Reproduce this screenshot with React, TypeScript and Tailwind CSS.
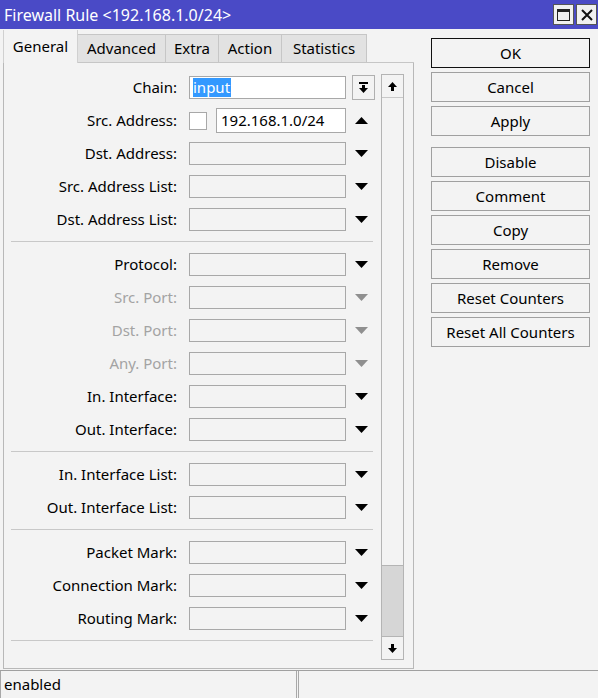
import React from "react";

const font = { fontFamily: '"Noto Sans", "Open Sans", sans-serif' };

const Tri: React.FC<{ up?: boolean; gray?: boolean }> = ({ up, gray }) => (
  <svg width="13" height="7" viewBox="0 0 13 7">
    <path
      d={up ? "M0 7H13L6.5 0Z" : "M0 0H13L6.5 7Z"}
      fill={gray ? "#8f8f8f" : "#000"}
    />
  </svg>
);

const EmptyBox = () => (
  <div className="w-[157px] h-[23px] border border-[#a8a8a8] bg-[#f3f3f3]" />
);

type RowProps = {
  label: string;
  disabled?: boolean;
  children?: React.ReactNode;
  arrow?: React.ReactNode;
};

const Row: React.FC<RowProps> = ({ label, disabled, children, arrow }) => (
  <div className="h-[33px] flex items-center">
    <div
      className={`w-[173px] text-right text-[15px] ${
        disabled ? "text-[#a3a3a3]" : "text-black"
      }`}
    >
      {label}
    </div>
    <div className="ml-[12px] flex items-center">{children ?? <EmptyBox />}</div>
    <div className="w-[30px] flex items-center justify-center">
      {arrow ?? <Tri gray={disabled} />}
    </div>
  </div>
);

const Sep = () => (
  <div className="h-[12px] pt-[5px]">
    <div className="ml-[7px] w-[362px] h-px bg-[#c8c8c8]" />
  </div>
);

const tabs = ["General", "Advanced", "Extra", "Action", "Statistics"];
const tabW = ["w-[75px]", "w-[88px]", "w-[53px]", "w-[63px]", "w-[85px]"];

const buttons = [
  "OK",
  "Cancel",
  "Apply",
  "Disable",
  "Comment",
  "Copy",
  "Remove",
  "Reset Counters",
  "Reset All Counters",
];

export default function App() {
  return (
    <div
      className="w-[598px] h-[698px] flex flex-col bg-[#f3f3f3] overflow-hidden"
      style={font}
    >
      {/* Title bar */}
      <div className="h-[29px] bg-[#4a4ac6] flex items-center pl-[4px] pr-[1px]">
        <span className="text-white text-[16px] flex-1">
          Firewall Rule &lt;192.168.1.0/24&gt;
        </span>
        <div className="w-[21px] h-[21px] bg-[#f0f0f0] border border-[#555] flex items-center justify-center">
          <div className="w-[13px] h-[12px] border border-[#222] border-t-[3px]" />
        </div>
        <div className="w-[21px] h-[21px] ml-[2px] bg-[#f0f0f0] border border-[#555] flex items-center justify-center">
          <svg width="12" height="12" viewBox="0 0 12 12">
            <path d="M1 1L11 11M11 1L1 11" stroke="#111" strokeWidth="2" />
          </svg>
        </div>
      </div>

      {/* Main */}
      <div className="h-[641px] flex pt-px">
        <div className="ml-[3px] w-[411px] flex flex-col">
          {/* Tabs */}
          <div className="h-[33px] flex items-end">
            {tabs.map((t, i) => (
              <div
                key={t}
                className={`${tabW[i]} flex items-center justify-center text-[15px] text-black ${
                  i === 0
                    ? "h-[33px] bg-[#f3f3f3] border-l border-r border-[#d0d0d0]"
                    : "h-[29px] bg-[#e2e2e2] border-r border-t border-b border-[#c6c6c6]"
                }`}
              >
                {t}
              </div>
            ))}
            <div className="flex-1 h-px border-b border-[#c6c6c6]" />
          </div>

          {/* Panel */}
          <div className="h-[606px] flex border-r border-b border-l border-[#b8b8b8]">
            <div className="w-[377px] pt-[8px] flex flex-col">
              <Row
                label="Chain:"
                arrow={
                  <div className="ml-[4px] w-[23px] h-[25px] border border-[#b0b0b0] bg-[#f3f3f3] flex items-center justify-center">
                    <svg width="9" height="11" viewBox="0 0 9 11">
                      <rect x="0" y="0" width="9" height="2" fill="#000" />
                      <rect x="3" y="3" width="3" height="3" fill="#000" />
                      <path d="M0 6H9L4.5 11Z" fill="#000" />
                    </svg>
                  </div>
                }
              >
                <div className="w-[157px] h-[23px] border border-[#a8a8a8] bg-white flex items-center pl-[3px]">
                  <span className="bg-[#3399ff] text-white text-[15px] leading-[19px] pr-px">
                    input
                  </span>
                </div>
              </Row>
              <Row label="Src. Address:" arrow={<Tri up />}>
                <div className="flex items-center">
                  <div className="w-[18px] h-[18px] border border-[#a8a8a8] bg-white" />
                  <div className="ml-[9px] w-[130px] h-[25px] border border-[#a8a8a8] bg-white flex items-center pl-[4px] text-[15px]">
                    192.168.1.0/24
                  </div>
                </div>
              </Row>
              <Row label="Dst. Address:" />
              <Row label="Src. Address List:" />
              <Row label="Dst. Address List:" />
              <Sep />
              <Row label="Protocol:" />
              <Row label="Src. Port:" disabled />
              <Row label="Dst. Port:" disabled />
              <Row label="Any. Port:" disabled />
              <Row label="In. Interface:" />
              <Row label="Out. Interface:" />
              <Sep />
              <Row label="In. Interface List:" />
              <Row label="Out. Interface List:" />
              <Sep />
              <Row label="Packet Mark:" />
              <Row label="Connection Mark:" />
              <Row label="Routing Mark:" />
              <Sep />
            </div>

            {/* Scrollbar */}
            <div className="mt-[11px] mb-[8px] w-[23px] border border-[#b4b4b4] flex flex-col">
              <div className="h-[23px] border-b border-[#c8c8c8] flex items-center justify-center">
                <svg width="9" height="9" viewBox="0 0 9 9">
                  <path d="M0 5H9L4.5 0Z" fill="#000" />
                  <rect x="3" y="5" width="3" height="4" fill="#000" />
                </svg>
              </div>
              <div className="flex-1 flex flex-col justify-end">
                <div className="h-[71px] bg-[#d6d6d6] border-t border-[#b4b4b4]" />
              </div>
              <div className="h-[23px] border-t border-[#b4b4b4] flex items-center justify-center">
                <svg width="9" height="9" viewBox="0 0 9 9">
                  <rect x="3" y="0" width="3" height="4" fill="#000" />
                  <path d="M0 4H9L4.5 9Z" fill="#000" />
                </svg>
              </div>
            </div>
          </div>
        </div>

        {/* Buttons */}
        <div className="ml-[17px] mt-[8px] w-[159px] flex flex-col">
          {buttons.map((b, i) => (
            <div
              key={b}
              className={`h-[30px] flex items-center justify-center text-[15px] text-black bg-[#f3f3f3] border ${
                i === 0 ? "border-[#111]" : "border-[#a0a0a0]"
              } ${i === 0 ? "" : i === 3 ? "mt-[11px]" : "mt-[4px]"}`}
            >
              {b}
            </div>
          ))}
        </div>
      </div>

      {/* Status bar */}
      <div className="h-[28px] flex border-t border-[#a0a0a0]">
        <div className="w-[297px] border-r border-l border-[#a8a8a8] flex items-center pl-[3px] text-[15px] text-black">
          enabled
        </div>
        <div className="flex-1 ml-px border-l border-[#a8a8a8]" />
      </div>
    </div>
  );
}
